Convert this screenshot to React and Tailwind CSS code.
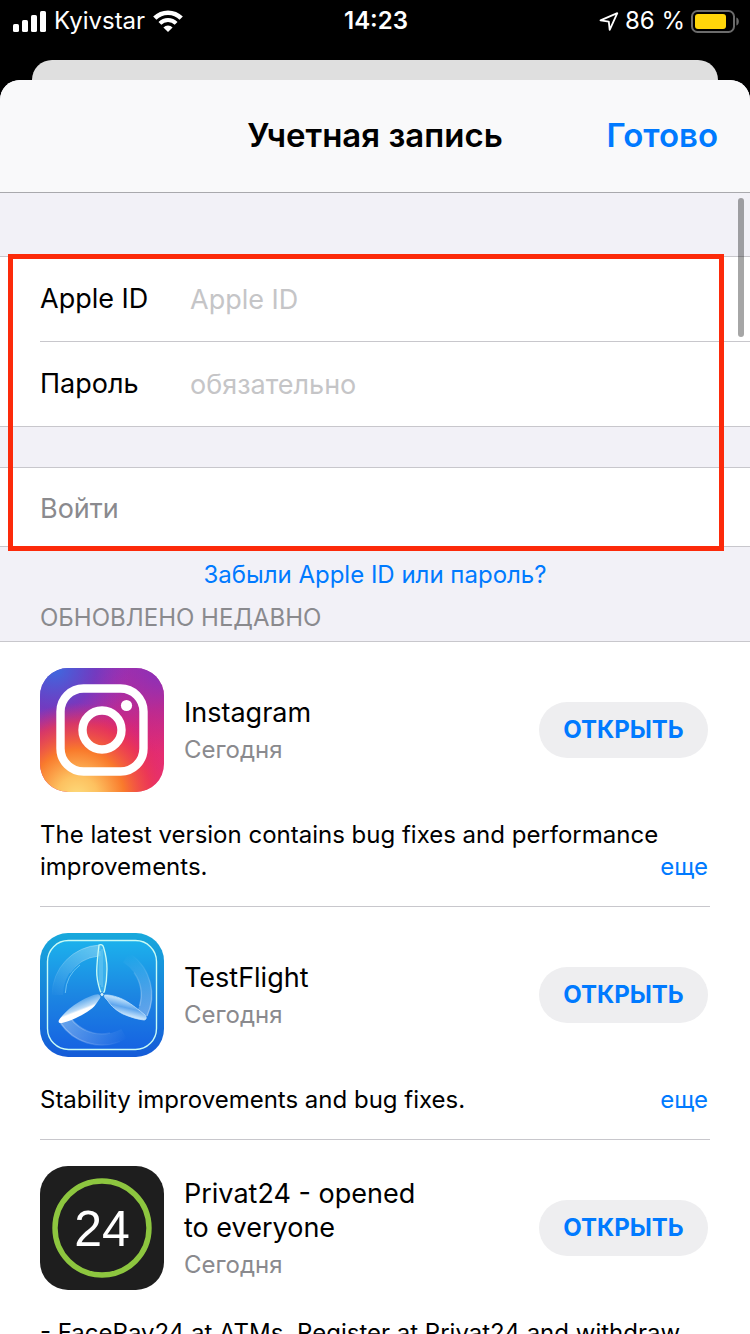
import React from "react";

function SignalBars() {
  return (
    <svg width="33" height="21" viewBox="0 0 33 21" fill="#fff" aria-hidden="true">
      <rect x="0" y="13" width="6" height="8" rx="1.6" />
      <rect x="9" y="9" width="6" height="12" rx="1.6" />
      <rect x="18" y="4" width="6" height="17" rx="1.6" />
      <rect x="27" y="0" width="6" height="21" rx="1.6" />
    </svg>
  );
}

function Wifi() {
  return (
    <svg width="30" height="22" viewBox="0 0 30 22" aria-hidden="true">
      <path d="M1.8 8.200a18.600 18.600 0 0 1 26.400 0" fill="none" stroke="#fff" strokeWidth="4.600" />
      <path d="M6.900 13.300a11.400 11.400 0 0 1 16.200 0" fill="none" stroke="#fff" strokeWidth="4" />
      <path d="M15 22l-4.600-4.600a6.500 6.500 0 0 1 9.200 0z" fill="#fff" />
    </svg>
  );
}

function LocationArrow() {
  return (
    <svg width="20" height="19" viewBox="0 0 20 19" aria-hidden="true">
      <path d="M18.300 1.200L1.500 8.400l8.300 1.200.900 8.300z" fill="none" stroke="#fff" strokeWidth="1.800" strokeLinejoin="round" />
    </svg>
  );
}

function Battery() {
  return (
    <svg width="48" height="23" viewBox="0 0 48 23" aria-hidden="true">
      <rect x="1" y="1" width="42" height="21" rx="5.500" fill="none" stroke="#6b6b6b" strokeWidth="2" />
      <rect x="4" y="4" width="31" height="15" rx="3" fill="#ffd60a" />
      <path d="M45.400 7.500c1.600.600 2.400 2 2.400 4s-.800 3.400-2.400 4z" fill="#6b6b6b" />
    </svg>
  );
}

function StatusBar() {
  return (
    <div className="grid h-[60px] grid-cols-3 items-start bg-black pt-1 pr-[11px] pl-[13px] text-[24px] leading-[34px] text-white">
      <div className="flex items-center gap-2">
        <SignalBars />
        <span>Kyivstar</span>
        <Wifi />
      </div>
      <div className="text-center font-semibold">14:23</div>
      <div className="flex items-center justify-end gap-[6px]">
        <LocationArrow />
        <span>86 %</span>
        <Battery />
      </div>
    </div>
  );
}

function InstagramIcon() {
  return (
    <svg className="size-[124px] shrink-0" viewBox="0 0 124 124" aria-hidden="true">
      <defs>
        <linearGradient id="ig-base" x1="0.1" y1="0" x2="0.75" y2="1">
          <stop offset="0" stopColor="#5b48cc" />
          <stop offset="0.3" stopColor="#a42ea8" />
          <stop offset="0.62" stopColor="#dc2672" />
          <stop offset="1" stopColor="#e8306f" />
        </linearGradient>
        <radialGradient id="ig-warm" cx="0.3" cy="1.04" r="0.76">
          <stop offset="0" stopColor="#fddc7c" />
          <stop offset="0.22" stopColor="#fdc160" />
          <stop offset="0.5" stopColor="#f97a2c" />
          <stop offset="0.78" stopColor="#ee3b4c" stopOpacity="0.7" />
          <stop offset="1" stopColor="#dc2672" stopOpacity="0" />
        </radialGradient>
        <radialGradient id="ig-cool" cx="0.12" cy="0" r="0.6">
          <stop offset="0" stopColor="#3d6be0" />
          <stop offset="0.55" stopColor="#6a3cc4" stopOpacity="0.75" />
          <stop offset="1" stopColor="#8b35c0" stopOpacity="0" />
        </radialGradient>
        <radialGradient id="ig-violet" cx="1" cy="0" r="0.7">
          <stop offset="0" stopColor="#8232be" />
          <stop offset="1" stopColor="#b42ca2" stopOpacity="0" />
        </radialGradient>
        <clipPath id="ig-clip">
          <rect width="124" height="124" rx="28" />
        </clipPath>
      </defs>
      <g clipPath="url(#ig-clip)">
        <rect width="124" height="124" fill="url(#ig-base)" />
        <rect width="124" height="124" fill="url(#ig-violet)" />
        <rect width="124" height="124" fill="url(#ig-cool)" />
        <rect width="124" height="124" fill="url(#ig-warm)" />
      </g>
      <rect x="20.5" y="20.5" width="83" height="83" rx="23" fill="none" stroke="#fff" strokeWidth="8.4" />
      <circle cx="62" cy="62" r="19.5" fill="none" stroke="#fff" strokeWidth="8.4" />
      <circle cx="86.5" cy="37.5" r="5.6" fill="#fff" />
    </svg>
  );
}

function TestFlightIcon() {
  return (
    <svg className="size-[124px] shrink-0" viewBox="0 0 124 124" aria-hidden="true">
      <defs>
        <linearGradient id="tf-edge" x1="0" y1="0" x2="0" y2="1">
          <stop offset="0" stopColor="#18a9dc" />
          <stop offset="1" stopColor="#155bd8" />
        </linearGradient>
        <linearGradient id="tf-face" x1="0" y1="0" x2="0" y2="1">
          <stop offset="0" stopColor="#1cb1ec" />
          <stop offset="0.5" stopColor="#1c86e2" />
          <stop offset="1" stopColor="#1663e2" />
        </linearGradient>
        <linearGradient id="tf-trail-a" gradientUnits="userSpaceOnUse" x1="14" y1="66" x2="60" y2="16">
          <stop offset="0" stopColor="#fff" stopOpacity="0" />
          <stop offset="1" stopColor="#fff" stopOpacity="0.32" />
        </linearGradient>
        <linearGradient id="tf-trail-b" gradientUnits="userSpaceOnUse" x1="88" y1="22" x2="104" y2="82">
          <stop offset="0" stopColor="#fff" stopOpacity="0" />
          <stop offset="1" stopColor="#fff" stopOpacity="0.32" />
        </linearGradient>
        <linearGradient id="tf-trail-c" gradientUnits="userSpaceOnUse" x1="88" y1="104" x2="24" y2="88">
          <stop offset="0" stopColor="#fff" stopOpacity="0" />
          <stop offset="1" stopColor="#fff" stopOpacity="0.32" />
        </linearGradient>
        <linearGradient id="tf-left" x1="0.35" y1="0.3" x2="0.6" y2="0.75">
          <stop offset="0" stopColor="#5da9ec" />
          <stop offset="0.5" stopColor="#bcdcf8" />
          <stop offset="0.62" stopColor="#fff" />
        </linearGradient>
        <linearGradient id="tf-right" x1="0.6" y1="0.25" x2="0.4" y2="0.75">
          <stop offset="0" stopColor="#b6dcfa" />
          <stop offset="0.5" stopColor="#5ea6ee" />
          <stop offset="1" stopColor="#c4e2fb" />
        </linearGradient>
      </defs>
      <rect width="124" height="124" rx="28" fill="url(#tf-edge)" />
      <rect x="7.5" y="7.500" width="109" height="109" rx="21" fill="url(#tf-face)" stroke="#c9fbf5" strokeWidth="1.400" />
      <g fill="none" strokeWidth="11">
        <path d="M60.500 17.500A44.500 44.500 0 0 0 17.500 62" stroke="url(#tf-trail-a)" />
        <path d="M86 24.500A44.500 44.500 0 0 1 102.300 80.800" stroke="url(#tf-trail-b)" />
        <path d="M24.700 86.200A44.500 44.500 0 0 0 84 100.700" stroke="url(#tf-trail-c)" />
      </g>
      <g fill="none" strokeWidth="1">
        <path d="M60 12A50 50 0 0 0 12 62M58 23.200A39 39 0 0 0 30 40" stroke="url(#tf-trail-a)" />
        <path d="M92 22A50 50 0 0 1 107 83M94 39.500A39 39 0 0 1 99.500 73" stroke="url(#tf-trail-b)" strokeWidth="1.400" />
        <path d="M20.500 90A50 50 0 0 0 80 108.700M30.500 85A39 39 0 0 0 70 100" stroke="url(#tf-trail-c)" strokeWidth="1.400" />
        <path d="M40 32A37 37 0 0 0 25.300 60" stroke="#9ae0fb" strokeOpacity="0.600" />
      </g>
      <path d="M59 12c2-1 4 0 4.500 2 1.500 5 3.500 12 3.500 22 0 8-1 16-2.500 22-.5 2.500-3.500 2.500-4.300 0C58 51 56.500 45 56.700 38 57 28 58 20 59 12z" fill="#49bdf0" fillOpacity="0.65" stroke="#c9fbf5" strokeWidth="1.300" />
      <path d="M60 18v34M62 16v38" stroke="#d5f5fd" strokeOpacity="0.35" strokeWidth="1" />
      <path d="M60 62c-2-1.500-5-.5-9 1-8 3-16 8-22 13-4 3.500-8 8-10 11-1 2 0 3.500 3 3 8-2 17-6 25-11 4-2.500 7-5 9-8 1.500-2.500 4-5 4.500-7z" fill="url(#tf-left)" />
      <path d="M64 62c6-.5 15 2 22 6 6 3.500 13 9 19 14 2 2 1.500 5-1 5-6-.5-14-3-21-6-6-3-12-8-15-13-2-2-4-4-4-6z" fill="url(#tf-right)" stroke="#cbe8fd" strokeWidth="0.700" />
      <circle cx="62" cy="61.500" r="2" fill="#d9f5fd" stroke="#1c82da" strokeWidth="1" />
    </svg>
  );
}

function PrivatIcon() {
  return (
    <svg className="size-[124px] shrink-0" viewBox="0 0 124 124" aria-hidden="true">
      <rect width="124" height="124" rx="28" fill="#1e1e1e" />
      <circle cx="62" cy="62" r="47" fill="none" stroke="#8dc63f" strokeWidth="5.400" />
      <text x="62" y="80" textAnchor="middle" fill="#fff" fontSize="50" fontFamily="'Liberation Sans', Arial, sans-serif">
        24
      </text>
    </svg>
  );
}

const updates = [
  {
    name: "Instagram",
    icon: <InstagramIcon />,
    notes: "The latest version contains bug fixes and performance improvements.",
    more: true,
  },
  {
    name: "TestFlight",
    icon: <TestFlightIcon />,
    notes: "Stability improvements and bug fixes.",
    more: true,
  },
  {
    name: "Privat24 - opened to everyone",
    icon: <PrivatIcon />,
    notes: "- FacePay24 at ATMs. Register at Privat24 and withdraw",
    more: false,
  },
];

function UpdateItem({ app }) {
  return (
    <li className="mx-10 border-b border-[#c8c7cc] pt-[26px] pb-[23px] last:border-b-0">
      <div className="flex items-center pr-0.5">
        {app.icon}
        <div className="ml-5 flex-1">
          <h3 className="max-w-[250px] text-[27px] leading-[34px] text-black">{app.name}</h3>
          <p className="mt-1.5 text-[24px] leading-7 text-[#8a8a8e]">Сегодня</p>
        </div>
        <button type="button" className="h-14 w-[169px] shrink-0 rounded-full bg-[#eeeef0] text-[24px] font-bold text-[#007aff]">
          ОТКРЫТЬ
        </button>
      </div>
      <div className="mt-[27px] grid pr-0.5 text-[24px] leading-8">
        <p className="col-start-1 row-start-1 text-black">{app.notes}</p>
        {app.more && (
          <a href="#more" className="col-start-1 row-start-1 self-end justify-self-end text-[#007aff]">
            еще
          </a>
        )}
      </div>
    </li>
  );
}

function SignInForm() {
  return (
    <form className="relative" onSubmit={(e) => e.preventDefault()}>
      <div className="border-y border-[#c8c7cc] bg-white pl-10 text-[27px]">
        <div className="flex h-[85px] items-center border-b border-[#c8c7cc]">
          <label htmlFor="apple-id" className="w-[150px] shrink-0">
            Apple ID
          </label>
          <input id="apple-id" type="email" placeholder="Apple ID" className="h-full min-w-0 flex-1 bg-transparent outline-none placeholder:text-[#c5c5c7]" />
        </div>
        <div className="flex h-[84px] items-center">
          <label htmlFor="password" className="w-[150px] shrink-0">
            Пароль
          </label>
          <input id="password" type="password" placeholder="обязательно" className="h-full min-w-0 flex-1 bg-transparent outline-none placeholder:text-[#c5c5c7]" />
        </div>
      </div>
      <button type="submit" className="mt-10 block h-20 w-full border-y border-[#c8c7cc] bg-white pt-1 pl-10 text-left text-[27px] text-[#8a8a8e]">
        Войти
      </button>
      <div className="pointer-events-none absolute -top-0.5 right-[26px] -bottom-1 left-2 border-[5px] border-[#fc2a0a]" />
    </form>
  );
}

export default function App() {
  return (
    <div className="h-screen overflow-hidden bg-black font-['Inter','Noto_Sans',sans-serif] text-black">
      <StatusBar />
      <div className="mx-8 h-5 rounded-t-[20px] bg-[#dfdfdf]" />
      <main className="overflow-hidden rounded-t-[20px] bg-[#f2f1f7]">
        <header className="grid h-[113px] grid-cols-[1fr_auto_1fr] items-center border-b border-[#a9a9ad] bg-[#f9f9fa] px-8 text-[33px] font-semibold">
          <h1 className="col-start-2">Учетная запись</h1>
          <button type="button" className="justify-self-end text-[#007aff]">
            Готово
          </button>
        </header>
        <div className="relative pt-[63px]">
          <SignInForm />
          <div className="absolute top-[5px] right-1.5 h-[139px] w-1.5 rounded-full bg-black/35" />
        </div>
        <div className="pt-3 text-center text-[24px] leading-8">
          <a href="#forgot" className="text-[#007aff]">
            Забыли Apple ID или пароль?
          </a>
        </div>
        <h2 className="border-b border-[#c8c7cc] pt-[11px] pb-[7px] pl-10 text-[24px] leading-8 text-[#8a8a8e]">ОБНОВЛЕНО НЕДАВНО</h2>
        <ul className="bg-white">
          {updates.map((app) => (
            <UpdateItem key={app.name} app={app} />
          ))}
        </ul>
      </main>
    </div>
  );
}
